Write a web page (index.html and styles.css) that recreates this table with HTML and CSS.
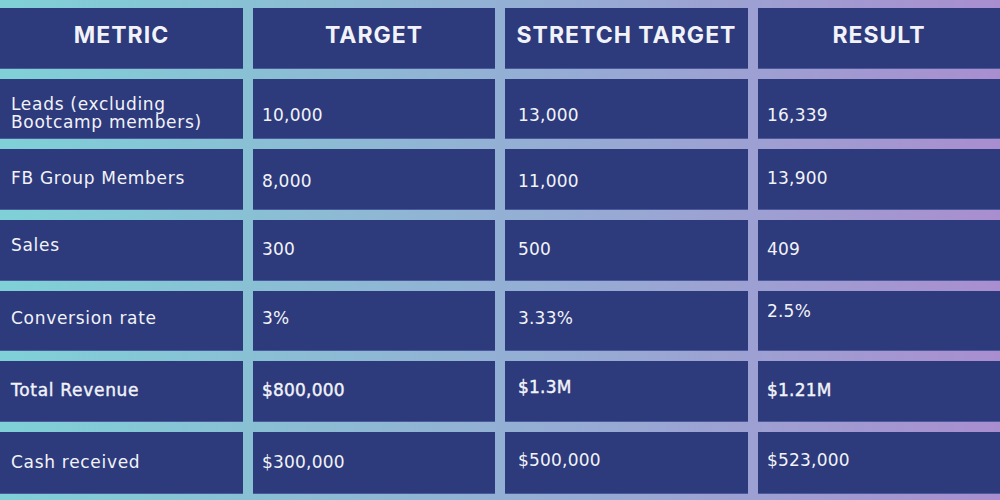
FILE: index.html
```html
<!DOCTYPE html>
<html lang="en">
<head>
<meta charset="utf-8">
<title>Launch results</title>
<link rel="stylesheet" href="styles.css">
</head>
<body>
<div class="board">
  <div class="cell head">METRIC</div>
  <div class="cell head">TARGET</div>
  <div class="cell head">STRETCH TARGET</div>
  <div class="cell head">RESULT</div>

  <div class="cell label dn-md">Leads (excluding<br>Bootcamp members)</div>
  <div class="cell dn-lg">10,000</div>
  <div class="cell wide dn-lg">13,000</div>
  <div class="cell dn-lg">16,339</div>

  <div class="cell label">FB Group Members</div>
  <div class="cell dn-sm">8,000</div>
  <div class="cell wide dn-sm">11,000</div>
  <div class="cell">13,900</div>

  <div class="cell label up-md">Sales</div>
  <div class="cell">300</div>
  <div class="cell wide">500</div>
  <div class="cell">409</div>

  <div class="cell label up-xs">Conversion rate</div>
  <div class="cell up-xs">3%</div>
  <div class="cell wide up-xs">3.33%</div>
  <div class="cell up-lg">2.5%</div>

  <div class="cell label strong">Total Revenue</div>
  <div class="cell strong">$800,000</div>
  <div class="cell wide strong up-sm">$1.3M</div>
  <div class="cell strong">$1.21M</div>

  <div class="cell label">Cash received</div>
  <div class="cell">$300,000</div>
  <div class="cell wide up-xs">$500,000</div>
  <div class="cell up-xs">$523,000</div>
</div>
</body>
</html>
```
FILE: styles.css
```css
html, body {
  margin: 0;
  padding: 0;
}
body {
  width: 1000px;
  height: 500px;
  overflow: hidden;
  background: linear-gradient(90deg, #7fd1d7 0%, #89c0d4 25%, #93b0d4 50%, #9da0d2 75%, #a98ecf 100%);
  font-family: "DejaVu Sans", sans-serif;
  color: #f2f3f8;
}
.board {
  display: grid;
  grid-template-columns: 243px 242px 243px 242px;
  grid-template-rows: 61px 60px 61px 61px 60px 61px 62px;
  column-gap: 10px;
  row-gap: 10px;
  padding-top: 8px;
}
.cell {
  background: #2d3a7c;
  border-bottom: 1px solid #4a5a9c;
  box-sizing: border-box;
  display: flex;
  align-items: center;
  padding: 0 8px 2px 9px;
  font-size: 17px;
  line-height: 18px;
  font-weight: 400;
  letter-spacing: 0.2px;
}
.cell.label {
  padding-left: 11px;
  letter-spacing: 0.7px;
}
.cell.wide {
  padding-left: 13px;
}
.cell.dn-sm { padding-top: 4px; padding-bottom: 0; }
.cell.dn-md { padding-top: 9px; padding-bottom: 0; }
.cell.dn-lg { padding-top: 13px; padding-bottom: 0; }
.cell.up-xs { padding-bottom: 5px; }
.cell.up-sm { padding-bottom: 8px; }
.cell.up-md { padding-bottom: 10px; }
.cell.up-lg { padding-bottom: 20px; }
.cell.strong {
  -webkit-text-stroke: 0.4px #f2f3f8;
}
.cell.head {
  justify-content: center;
  padding: 0 0 6px 0;
  font-family: "Inter", sans-serif;
  font-size: 23px;
  font-weight: 700;
  letter-spacing: 1px;
}
```
